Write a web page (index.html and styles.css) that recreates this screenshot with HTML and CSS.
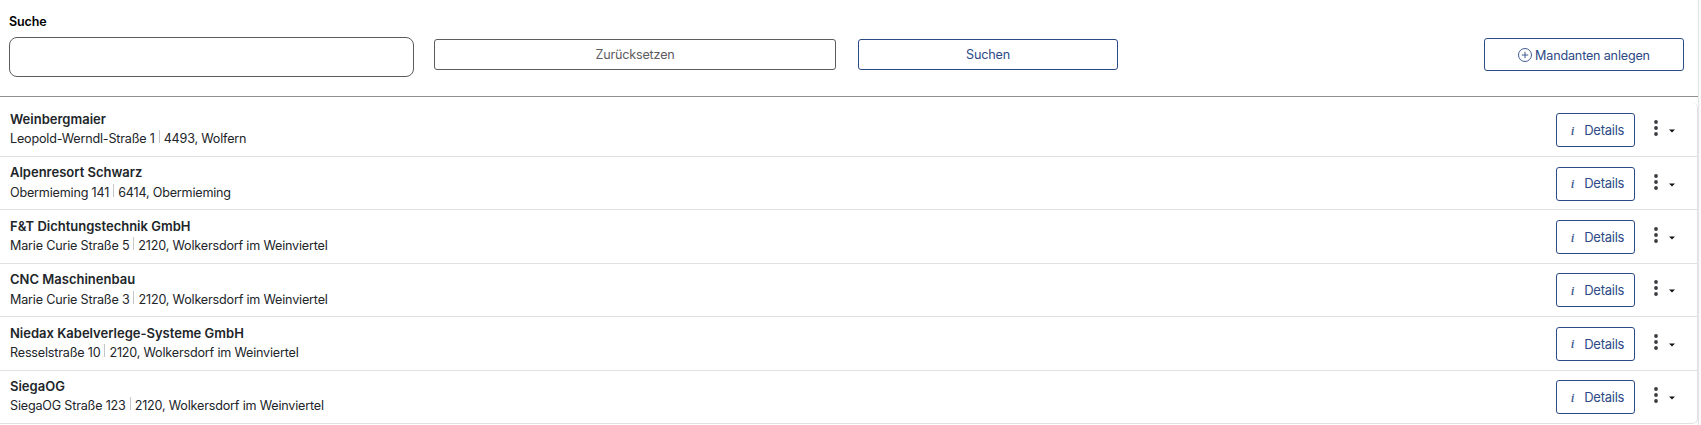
FILE: index.html
```html
<!DOCTYPE html>
<html lang="de">
<head>
<meta charset="utf-8">
<title>Mandanten</title>
<link rel="stylesheet" href="styles.css">
</head>
<body>
<svg class="sprite" aria-hidden="true">
  <symbol id="dots" viewBox="0 0 4 16"><circle cx="2" cy="2" r="1.9"/><circle cx="2" cy="8" r="1.9"/><circle cx="2" cy="14" r="1.9"/></symbol>
  <symbol id="caret" viewBox="0 0 6 4"><path d="M0 .5h6L3 3.5z"/></symbol>
</svg>
<main class="page">
  <form class="search">
    <div class="field">
      <label class="label" for="q">Suche</label>
      <input class="input" id="q" type="text">
    </div>
    <button class="btn reset" type="button">Zurücksetzen</button>
    <button class="btn submit" type="button">Suchen</button>
    <button class="btn create" type="button">
      <svg class="plus" viewBox="0 0 14 14"><circle cx="7" cy="7" r="6.5"/><path d="M7 3.8v6.4M3.8 7h6.4"/></svg>
      <span>Mandanten anlegen</span>
    </button>
  </form>
  <ul class="list">
    <li class="row">
      <div class="info"><div class="name">Weinbergmaier</div><div class="address"><span>Leopold-Werndl-Straße 1</span><i class="divider"></i><span>4493, Wolfern</span></div></div>
      <button class="btn details" type="button"><em class="i">i</em><span>Details</span></button>
      <span class="menu"><svg class="dots"><use href="#dots"/></svg><svg class="caret"><use href="#caret"/></svg></span>
    </li>
    <li class="row">
      <div class="info"><div class="name">Alpenresort Schwarz</div><div class="address"><span>Obermieming 141</span><i class="divider"></i><span>6414, Obermieming</span></div></div>
      <button class="btn details" type="button"><em class="i">i</em><span>Details</span></button>
      <span class="menu"><svg class="dots"><use href="#dots"/></svg><svg class="caret"><use href="#caret"/></svg></span>
    </li>
    <li class="row">
      <div class="info"><div class="name">F&amp;T Dichtungstechnik GmbH</div><div class="address"><span>Marie Curie Straße 5</span><i class="divider"></i><span>2120, Wolkersdorf im Weinviertel</span></div></div>
      <button class="btn details" type="button"><em class="i">i</em><span>Details</span></button>
      <span class="menu"><svg class="dots"><use href="#dots"/></svg><svg class="caret"><use href="#caret"/></svg></span>
    </li>
    <li class="row">
      <div class="info"><div class="name">CNC Maschinenbau</div><div class="address"><span>Marie Curie Straße 3</span><i class="divider"></i><span>2120, Wolkersdorf im Weinviertel</span></div></div>
      <button class="btn details" type="button"><em class="i">i</em><span>Details</span></button>
      <span class="menu"><svg class="dots"><use href="#dots"/></svg><svg class="caret"><use href="#caret"/></svg></span>
    </li>
    <li class="row">
      <div class="info"><div class="name">Niedax Kabelverlege-Systeme GmbH</div><div class="address"><span>Resselstraße 10</span><i class="divider"></i><span>2120, Wolkersdorf im Weinviertel</span></div></div>
      <button class="btn details" type="button"><em class="i">i</em><span>Details</span></button>
      <span class="menu"><svg class="dots"><use href="#dots"/></svg><svg class="caret"><use href="#caret"/></svg></span>
    </li>
    <li class="row">
      <div class="info"><div class="name">SiegaOG</div><div class="address"><span>SiegaOG Straße 123</span><i class="divider"></i><span>2120, Wolkersdorf im Weinviertel</span></div></div>
      <button class="btn details" type="button"><em class="i">i</em><span>Details</span></button>
      <span class="menu"><svg class="dots"><use href="#dots"/></svg><svg class="caret"><use href="#caret"/></svg></span>
    </li>
  </ul>
</main>
</body>
</html>
```
FILE: styles.css
```css
* { box-sizing: border-box; }
body {
  margin: 0;
  height: 425px;
  overflow: hidden;
  background: #fafafa;
  color: #212529;
  font: 13px/19.5px Inter, "Liberation Sans", sans-serif;
}
.sprite { display: none; }
.page {
  width: 1699px;
  height: 425px;
  background: #fff;
  border-right: 1px solid #e4e5e5;
}
.search {
  display: flex;
  align-items: flex-start;
  height: 97px;
  padding: 12px 14px 0 9px;
  border-bottom: 1px solid #8c908f;
}
.field { width: 405px; }
.label {
  display: block;
  height: 25px;
  color: #000;
  font-size: 12.5px;
  font-weight: 600;
  letter-spacing: -.1px;
}
.input {
  display: block;
  width: 405px;
  height: 40px;
  border: 1px solid #5c5c5e;
  border-radius: 8px;
  background: #fff;
}
.btn {
  display: flex;
  align-items: center;
  justify-content: center;
  padding: 0;
  border: 1px solid #2c4a86;
  border-radius: 3px;
  background: #fff;
  color: #2c4a86;
  font: inherit;
  font-size: 12.6px;
  letter-spacing: -.18px;
}
.reset {
  width: 402px;
  height: 31px;
  margin: 27px 0 0 20px;
  border-color: #5c5c5e;
  color: #5c5c5e;
}
.submit {
  width: 260px;
  height: 31px;
  margin: 27px 0 0 22px;
}
.create {
  width: 200px;
  height: 33px;
  margin: 26px 0 0 auto;
  padding-top: 2px;
  gap: 3px;
}
.plus {
  width: 14px;
  height: 14px;
  margin-top: -1px;
  fill: none;
  stroke: currentColor;
  stroke-width: .9;
}
.list {
  width: 1698px;
  height: 321px;
  margin: 6px 0 0;
  padding: .6px 0 0;
  border-right: 1px solid #dee2e6;
  border-radius: 0 5px 5px 0;
  list-style: none;
}
.row {
  display: flex;
  align-items: flex-start;
  height: 53.4px;
  padding: 6px 11px 0 10px;
  border-bottom: 1px solid #dee2e3;
}
.row:last-child { border-bottom-right-radius: 5px; }
.info { flex: 1; padding-top: .4px; }
.name { font-weight: 600; }
.address { display: flex; font-size: 12.6px; letter-spacing: -.19px; }
.divider {
  width: 1px;
  height: 13px;
  margin: 1px 4px 0;
  background: #c4c8ca;
}
.details {
  width: 79px;
  height: 34px;
  margin-top: 3.7px;
  padding: 1px 0 0 4px;
  gap: 10px;
  font-size: 13px;
  letter-spacing: -.25px;
}
.i { font: italic 13px/16px "Liberation Serif", serif; -webkit-text-stroke: .2px; }
.menu {
  display: flex;
  align-items: flex-start;
  width: 32px;
  margin: 10.6px 0 0 19px;
  gap: 11px;
}
.dots {
  width: 4px;
  height: 16px;
  fill: #3a3d40;
}
.caret {
  width: 6px;
  height: 4px;
  margin-top: 9px;
  fill: #111;
}
```
